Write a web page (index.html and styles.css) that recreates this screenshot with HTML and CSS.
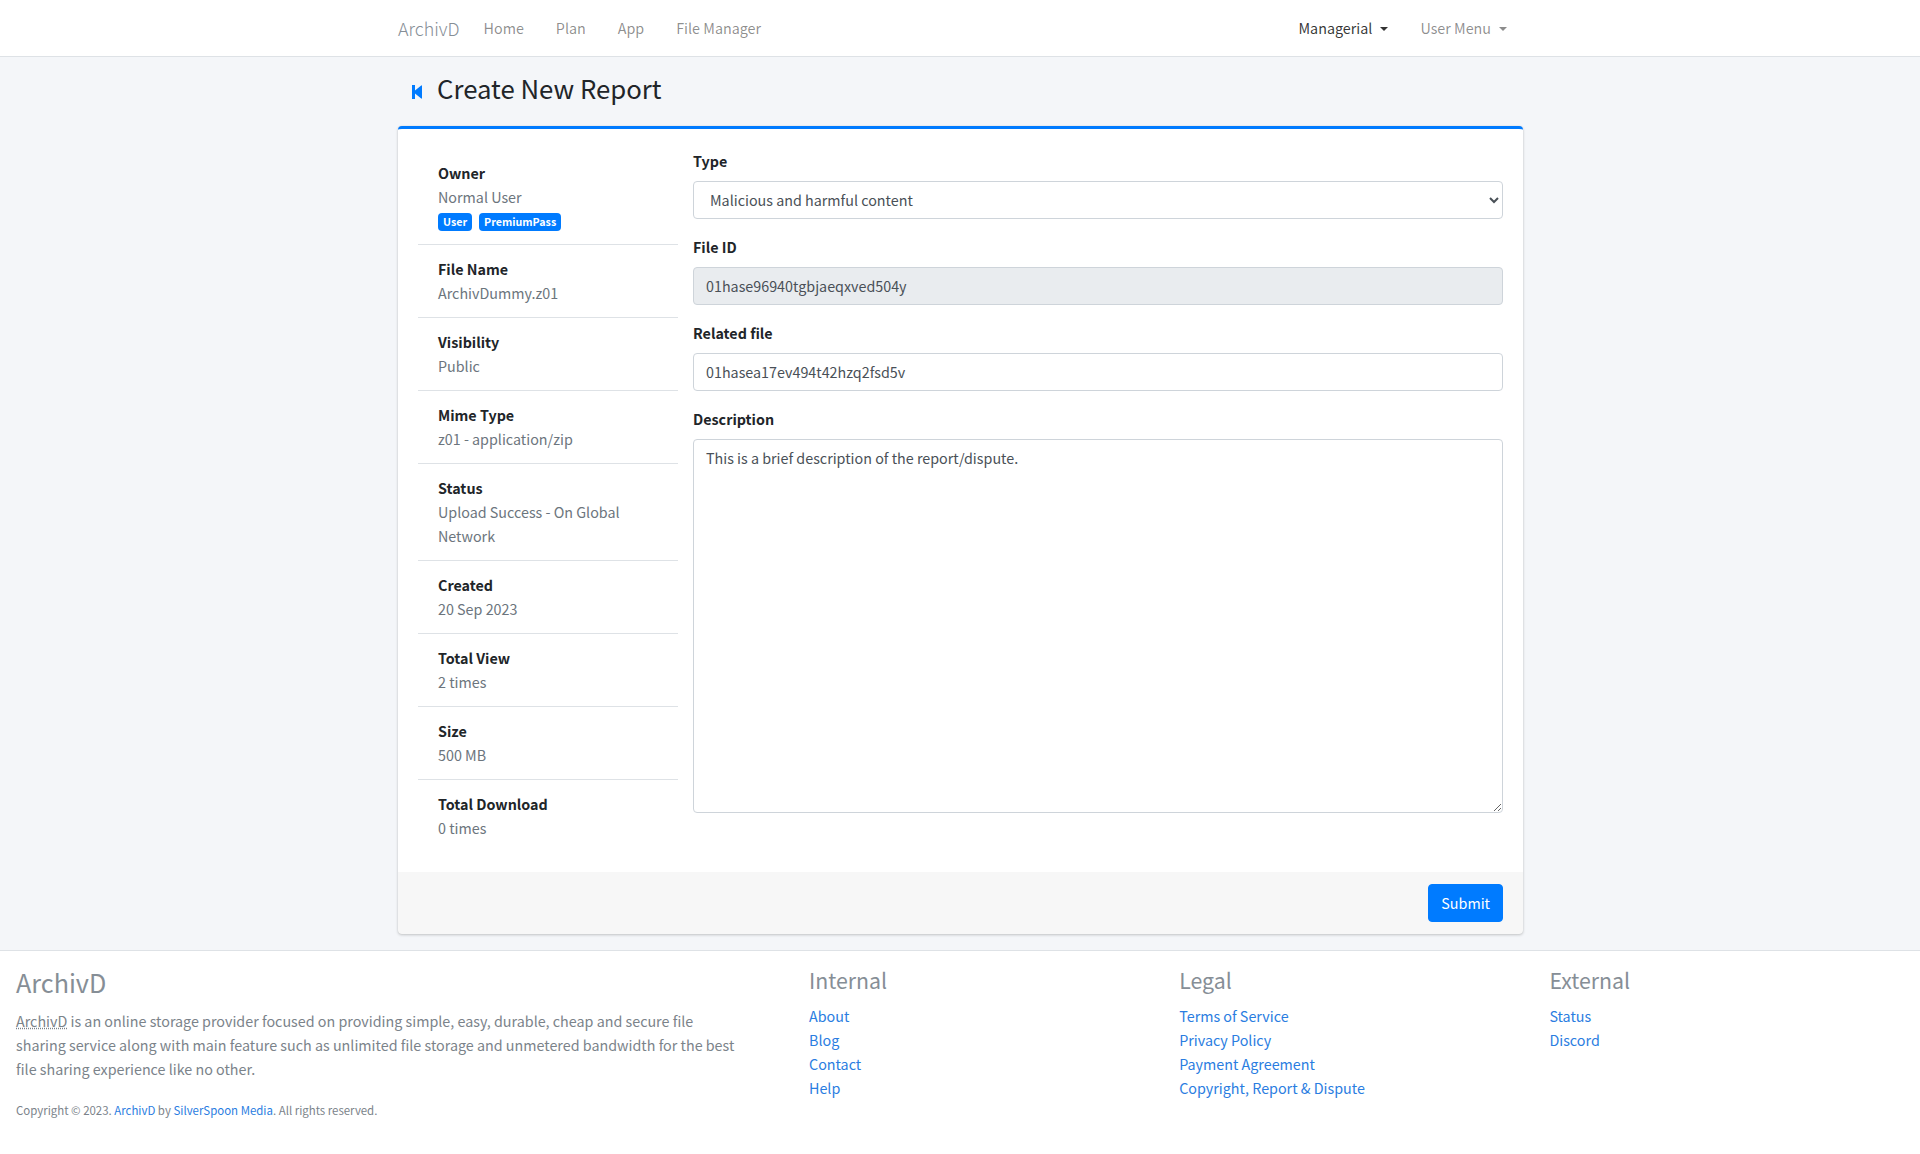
FILE: index.html
```html
<!DOCTYPE html>
<html lang="en">

<head>
  <meta charset="UTF-8">
  <meta name="viewport" content="width=device-width, initial-scale=1.0">
  <title>Create New Report</title>
  <link rel="stylesheet" href="styles.css">
</head>

<body>
  <nav class="navbar">
    <div class="navbar-inner">
      <a class="brand" href="#">ArchivD</a>
      <ul class="nav-list">
        <li><a href="#">Home</a></li>
        <li><a href="#">Plan</a></li>
        <li><a href="#">App</a></li>
        <li><a href="#">File Manager</a></li>
      </ul>
      <ul class="nav-list nav-right">
        <li><a class="dropdown active" href="#">Managerial</a></li>
        <li><a class="dropdown" href="#">User Menu</a></li>
      </ul>
    </div>
  </nav>

  <main class="content">
    <div class="page-title">
      <svg class="back-icon" viewBox="0 0 10 14" width="10" height="14">
        <path d="M0 0h3v5.600L9.500 .2 10 .8v12.400l-.5.600L3 8.400V14H0z" fill="#007bff" />
      </svg>
      <h1>Create New Report</h1>
    </div>

    <form class="card">
      <div class="card-body">
        <ul class="info-list">
          <li>
            <strong>Owner</strong>
            <span>Normal User</span>
            <div class="badges"><span class="badge">User</span><span class="badge">PremiumPass</span></div>
          </li>
          <li><strong>File Name</strong><span>ArchivDummy.z01</span></li>
          <li><strong>Visibility</strong><span>Public</span></li>
          <li><strong>Mime Type</strong><span>z01 - application/zip</span></li>
          <li><strong>Status</strong><span>Upload Success - On Global Network</span></li>
          <li><strong>Created</strong><span>20 Sep 2023</span></li>
          <li><strong>Total View</strong><span>2 times</span></li>
          <li><strong>Size</strong><span>500 MB</span></li>
          <li><strong>Total Download</strong><span>0 times</span></li>
        </ul>

        <div class="fields">
          <label for="type">Type</label>
          <select id="type" class="control">
            <option>Malicious and harmful content</option>
          </select>

          <label for="file-id">File ID</label>
          <input id="file-id" class="control" type="text" value="01hase96940tgbjaeqxved504y" readonly>

          <label for="related">Related file</label>
          <input id="related" class="control" type="text" value="01hasea17ev494t42hzq2fsd5v">

          <label for="description">Description</label>
          <textarea id="description" class="control">This is a brief description of the report/dispute.</textarea>
        </div>
      </div>
      <div class="card-footer">
        <button class="btn" type="submit">Submit</button>
      </div>
    </form>
  </main>

  <footer class="footer">
    <div class="footer-about">
      <h2>ArchivD</h2>
      <p><abbr title="ArchivD">ArchivD</abbr> is an online storage provider focused on providing simple, easy, durable, cheap and secure file sharing service along with main feature such as unlimited file storage and unmetered bandwidth for the best file sharing experience like no other.</p>
      <small>Copyright © 2023. <a href="#">ArchivD</a> by <a href="#">SilverSpoon Media</a>. All rights reserved.</small>
    </div>
    <div class="footer-col">
      <h3>Internal</h3>
      <a href="#">About</a>
      <a href="#">Blog</a>
      <a href="#">Contact</a>
      <a href="#">Help</a>
    </div>
    <div class="footer-col">
      <h3>Legal</h3>
      <a href="#">Terms of Service</a>
      <a href="#">Privacy Policy</a>
      <a href="#">Payment Agreement</a>
      <a href="#">Copyright, Report &amp; Dispute</a>
    </div>
    <div class="footer-col">
      <h3>External</h3>
      <a href="#">Status</a>
      <a href="#">Discord</a>
    </div>
  </footer>
</body>

</html>
```

FILE: styles.css
```css
* {
  box-sizing: border-box;
}

body {
  display: flex;
  flex-direction: column;
  min-height: 100vh;
  margin: 0;
  background-color: #f4f6f9;
  color: #212529;
  font-family: "Noto Sans CJK SC", "Noto Sans", sans-serif;
  font-size: 14.32px;
  line-height: 24px;
}

a {
  text-decoration: none;
}

/* Navbar */
.navbar {
  height: 57px;
  background-color: #fff;
  border-bottom: 1px solid #dee2e6;
}

.navbar-inner {
  display: flex;
  align-items: center;
  width: 1126px;
  height: 56px;
  margin: 0 auto;
  padding-left: 1px;
}

.brand {
  margin-right: 16px;
  color: #868e96;
  font-size: 17.9px;
  font-weight: 300;
}

.nav-list {
  display: flex;
  margin: 0;
  padding: 0;
  list-style: none;
}

.nav-list a {
  display: block;
  padding: 8px 16px;
  color: rgba(0, 0, 0, 0.45);
}

.nav-list li:first-child a {
  padding-left: 8px;
}

.nav-right {
  margin-left: auto;
}

.nav-list .active {
  color: rgba(0, 0, 0, 0.8);
}

.dropdown::after {
  content: "";
  display: inline-block;
  margin-left: 8px;
  vertical-align: 3px;
  border-top: 4.8px solid;
  border-right: 4.8px solid transparent;
  border-left: 4.8px solid transparent;
}

/* Title */
.content {
  width: 1126px;
  margin: 0 auto;
}

.page-title {
  display: flex;
  align-items: center;
  height: 69px;
  padding-bottom: 8px;
  padding-left: 15px;
}

.back-icon {
  margin-right: 15px;
  margin-top: 8px;
}

h1 {
  margin: 0;
  font-size: 25.76px;
  font-weight: 400;
  line-height: 34px;
}

/* Card */
.card {
  margin-left: 1px;
  background-color: #fff;
  border-top: 3px solid #007bff;
  border-radius: 4px;
  box-shadow: 0 0 1px rgba(0, 0, 0, 0.125), 0 1px 3px rgba(0, 0, 0, 0.2);
}

.card-body {
  display: flex;
  gap: 15px;
  padding: 20px 20px 20px 20px;
}

.info-list {
  flex: none;
  width: 260px;
  margin: 0;
  padding: 0;
  list-style: none;
}

.info-list li {
  padding: 12px 20px;
  border-bottom: 1px solid #dee2e6;
  color: #6c757d;
}

.info-list li:last-child {
  border-bottom: none;
}

.info-list strong,
.info-list span {
  display: block;
}

.info-list strong {
  color: #212529;
  font-weight: 600;
}

.badges {
  display: flex;
  gap: 7px;
  margin: 4px 0 1px;
}

.info-list .badge {
  padding: 3px 5px;
  background-color: #007bff;
  border-radius: 4px;
  color: #fff;
  font-size: 10.7px;
  font-weight: 700;
  line-height: 12px;
}

.fields {
  flex: 1;
  display: flex;
  flex-direction: column;
}

.fields label {
  margin-bottom: 8px;
  font-weight: 600;
}

.control {
  display: block;
  width: 100%;
  height: 38px;
  margin-bottom: 16px;
  padding: 5px 12px 7px;
  background-color: #fff;
  border: 1px solid #ced4da;
  border-radius: 4px;
  color: #495057;
  font-family: inherit;
  font-size: 14.32px;
  line-height: 24px;
}

input[readonly] {
  background-color: #e9ecef;
}

textarea.control {
  height: 374px;
  margin-bottom: 0;
  padding: 6px 12px;
}

.card-footer {
  display: flex;
  justify-content: flex-end;
  padding: 12px 20px;
  background-color: rgba(0, 0, 0, 0.03);
  border-radius: 0 0 4px 4px;
}

.btn {
  padding: 6px 12px;
  background-color: #007bff;
  border: 1px solid #007bff;
  border-radius: 4px;
  color: #fff;
  font-family: inherit;
  font-size: 14.32px;
  line-height: 24px;
}

/* Footer */
.footer {
  flex: 1;
  display: flex;
  margin-top: 16px;
  padding: 14px 16px 16px;
  background-color: #fff;
  border-top: 1px solid #dee2e6;
  color: #7b838a;
}

.footer-about {
  flex: none;
  width: 793px;
  padding-right: 71px;
}

.footer-about h2 {
  margin: 0 0 10px;
  color: #868e96;
  font-size: 25.2px;
  font-weight: 400;
  line-height: 34px;
}

.footer-about p {
  margin: 0 0 16px;
}

.footer-about abbr {
  text-decoration: underline dotted;
}

.footer-about small {
  font-size: 11.44px;
}

.footer a {
  color: #2a7de1;
}

.footer-col {
  flex: none;
  width: 370.2px;
  display: flex;
  flex-direction: column;
}

.footer-col h3 {
  margin: 0 0 10px;
  color: #868e96;
  font-size: 21.3px;
  font-weight: 400;
  line-height: 29px;
}
```
